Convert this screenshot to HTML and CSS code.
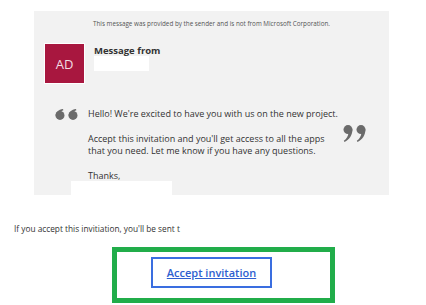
FILE: index.html
```html
<!DOCTYPE html>
<html>
<head>
<meta charset="utf-8">
<link rel="stylesheet" href="styles.css">
</head>
<body>
<div class="card">
  <div class="disclaimer">This message was provided by the sender and is not from Microsoft Corporation.</div>
  <div class="sender">
    <div class="avatar">AD</div>
    <div class="from">
      <div class="from-label">Message from</div>
      <div class="redact redact-name"></div>
    </div>
  </div>
  <div class="quote">
    <svg class="q-open" width="24" height="11" viewBox="0 0 24 11">
      <g fill="#6b6b6b">
        <circle cx="5" cy="6.4" r="4.5"/>
        <path d="M0.6,6.6 C0.6,3 3.5,0.6 8,0 L8.4,1.2 C6,2 4.6,3.4 4.4,5 Z"/>
        <circle cx="18" cy="6.4" r="4.5"/>
        <path d="M13.6,6.6 C13.6,3 16.5,0.6 21,0 L21.4,1.2 C19,2 17.6,3.4 17.4,5 Z"/>
      </g>
    </svg>
    <div class="q-body">
      <p>Hello! We're excited to have you with us on the new project.</p>
      <p>Accept this invitation and you'll get access to all the apps<br>that you need. Let me know if you have any questions.</p>
      <p class="thanks">Thanks,</p>
    </div>
    <svg class="q-close" width="24" height="18" viewBox="0 0 24 18">
      <g fill="#6b6b6b">
        <circle cx="5" cy="4.6" r="4.5"/>
        <path d="M9.4,4.4 C9.4,10 6.5,14.5 1.5,17 L0.8,15.8 C3.6,13.8 5.2,11 5.4,8 Z"/>
        <circle cx="18" cy="4.6" r="4.5"/>
        <path d="M22.4,4.4 C22.4,10 19.5,14.5 14.5,17 L13.8,15.8 C16.6,13.8 18.2,11 18.4,8 Z"/>
      </g>
    </svg>
  </div>
  <div class="redact redact-sign"></div>
</div>
<div class="note">If you accept this invitiation, you'll be sent t</div>
<div class="highlight">
  <a class="btn" href="#">Accept invitation</a>
</div>
</body>
</html>
```
FILE: styles.css
```css
html, body {
  margin: 0;
  padding: 0;
  background: #fff;
  font-family: "Open Sans", "Noto Sans", sans-serif;
  color: #333;
}
.card {
  margin: 11px 0 0 34px;
  width: 355px;
  height: 184px;
  background: #f2f2f2;
  display: flex;
  flex-direction: column;
  position: relative;
}
.disclaimer {
  text-align: center;
  font-size: 6.3px;
  color: #555;
  margin-top: 8px;
  line-height: 9px;
}
.sender {
  display: flex;
  gap: 9px;
  margin: 15px 0 0 10px;
}
.avatar {
  width: 39px;
  height: 39px;
  background: #a8173f;
  border: 1px solid #fff;
  box-sizing: content-box;
  color: #f2dde3;
  font-size: 13px;
  display: flex;
  align-items: center;
  justify-content: center;
}
.from-label {
  font-weight: 700;
  font-size: 9.5px;
  color: #333;
  line-height: 12px;
  margin-top: 2px;
}
.redact {
  background: #fff;
}
.redact-name {
  width: 55px;
  height: 15px;
  margin-top: -1px;
}
.quote {
  display: grid;
  grid-template-columns: 33px 255px 24px;
  margin: 24px 0 0 21px;
  align-items: start;
}
.q-open {
  display: block;
  margin-top: 1px;
}
.q-close {
  display: block;
  margin-top: 17px;
}
.q-body {
  font-size: 9px;
  color: #333;
  line-height: 12px;
  white-space: nowrap;
}
.q-body p {
  margin: 0 0 13px 0;
}
.q-body p.thanks {
  margin: 0;
}
.redact-sign {
  position: absolute;
  left: 37px;
  bottom: 0;
  width: 101px;
  height: 14px;
}
.note {
  margin: 28px 0 0 14px;
  font-size: 8.3px;
  color: #333;
  line-height: 11px;
}
.highlight {
  margin: 13px 0 0 112px;
  width: 223px;
  height: 56px;
  box-sizing: border-box;
  border: 5px solid #21ad4a;
  display: flex;
  justify-content: flex-start;
  align-items: flex-start;
  padding: 5px 0 0 34px;
}
.btn {
  width: 121px;
  height: 31px;
  box-sizing: border-box;
  border: 2px solid #3a6ee0;
  display: flex;
  align-items: center;
  justify-content: center;
  color: #2f5fd0;
  font-size: 11px;
  font-weight: 600;
  text-decoration: underline;
}
```
